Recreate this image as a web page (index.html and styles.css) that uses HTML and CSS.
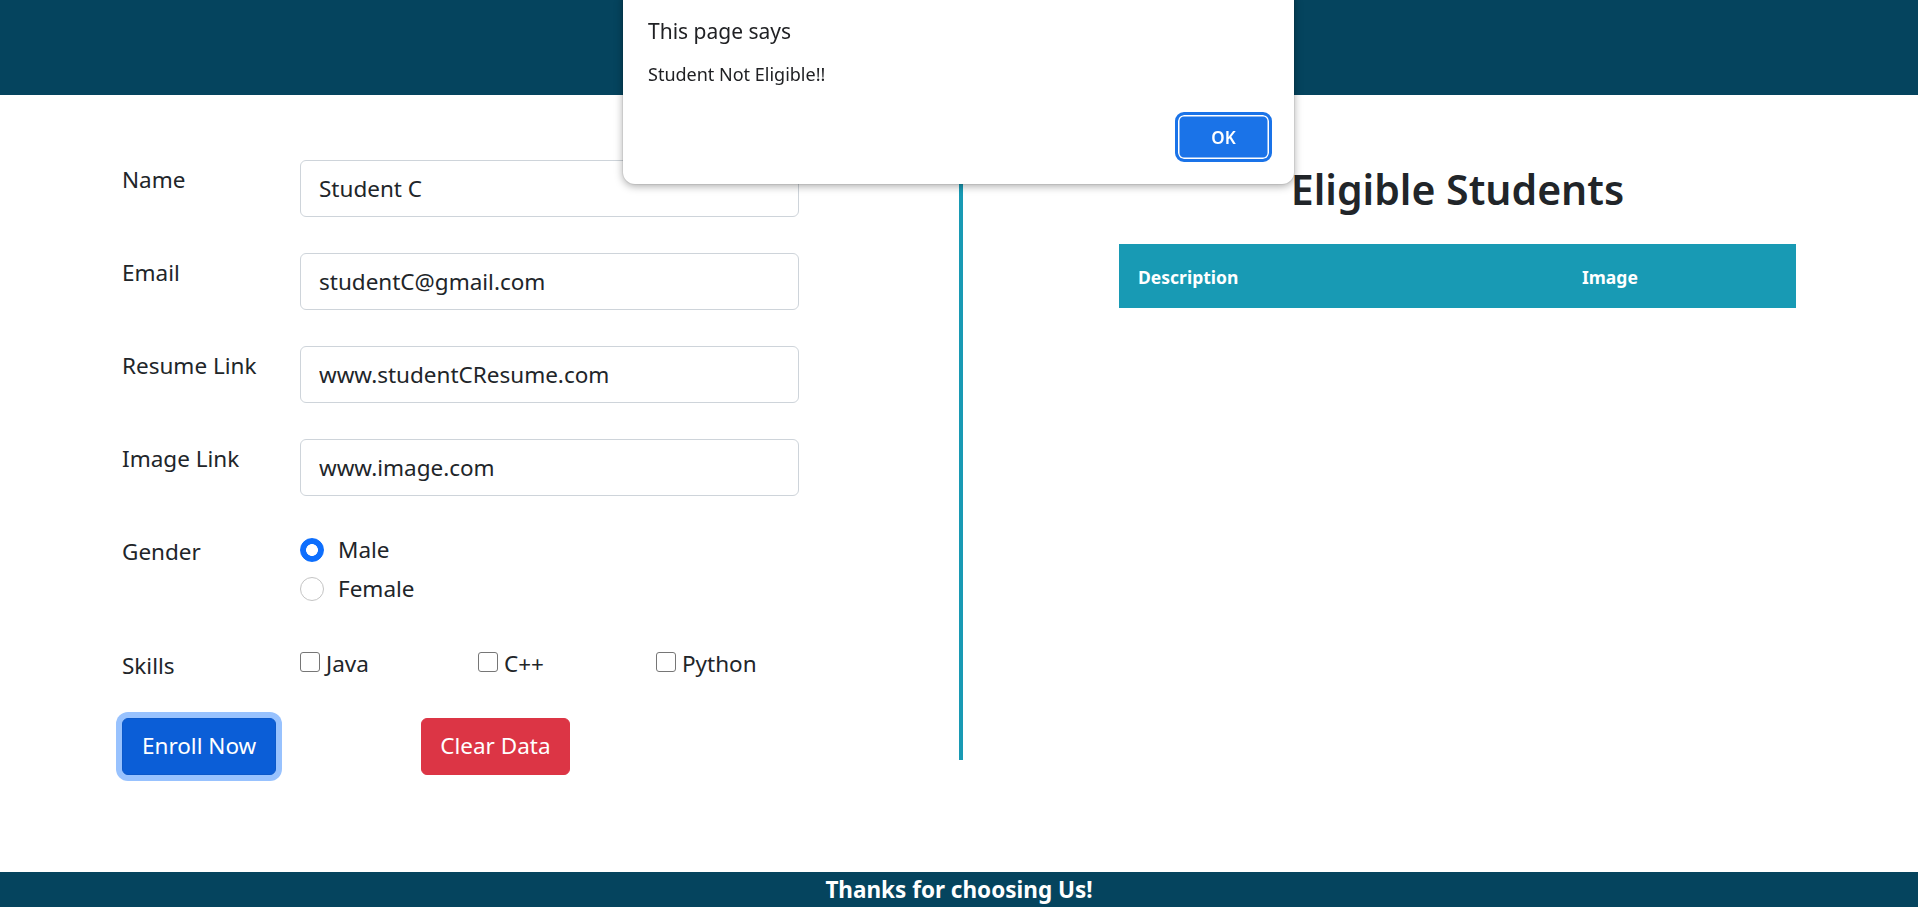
FILE: index.html
```html
<!DOCTYPE html>
<html lang="en">
<head>
<meta charset="utf-8">
<title>Student Enrollment</title>
<link rel="stylesheet" href="styles.css">
</head>
<body>
<header class="topbar"></header>
<main class="content">
  <section class="form-col">
    <form class="form">
      <div class="row">
        <label class="lbl">Name</label>
        <input class="field" type="text" value="Student C">
      </div>
      <div class="row">
        <label class="lbl">Email</label>
        <input class="field" type="text" value="studentC@gmail.com">
      </div>
      <div class="row">
        <label class="lbl">Resume Link</label>
        <input class="field" type="text" value="www.studentCResume.com">
      </div>
      <div class="row">
        <label class="lbl">Image Link</label>
        <input class="field" type="text" value="www.image.com">
      </div>
      <div class="row">
        <span class="lbl">Gender</span>
        <div class="radios">
          <label class="check"><span class="radio on"></span>Male</label>
          <label class="check"><span class="radio"></span>Female</label>
        </div>
      </div>
      <div class="row skills-row">
        <span class="lbl">Skills</span>
        <div class="skills">
          <label class="skill"><span class="box"></span>Java</label>
          <label class="skill"><span class="box"></span>C++</label>
          <label class="skill"><span class="box"></span>Python</label>
        </div>
      </div>
      <div class="actions">
        <button type="button" class="btn enroll">Enroll Now</button>
        <button type="button" class="btn clear">Clear Data</button>
      </div>
    </form>
  </section>
  <div class="divider"></div>
  <section class="list-col">
    <div class="list-inner">
      <h2 class="title">Eligible Students</h2>
      <table class="students">
        <thead>
          <tr><th class="c-desc">Description</th><th class="c-img">Image</th></tr>
        </thead>
        <tbody></tbody>
      </table>
    </div>
  </section>
</main>
<footer class="footer">Thanks for choosing Us!</footer>

<div class="alert">
  <div class="alert-title">This page says</div>
  <div class="alert-msg">Student Not Eligible!!</div>
  <div class="alert-actions"><button type="button" class="ok">OK</button></div>
</div>
</body>
</html>
```
FILE: styles.css
```css
* { box-sizing: border-box; }
html, body { margin: 0; padding: 0; }
body {
  height: 907px;
  display: flex;
  flex-direction: column;
  font-family: "Noto Sans", "Open Sans", sans-serif;
  font-size: 22.5px;
  line-height: 36px;
  color: #212529;
  background: #fff;
  overflow: hidden;
}
.topbar { height: 95px; background: #05445e; flex: none; }
.content { flex: 1; display: flex; align-items: flex-start; padding-top: 35px; }

.form-col { width: 959px; flex: none; padding: 30px 0 0 122px; }
.row { display: flex; align-items: flex-start; margin-bottom: 36px; }
.lbl { width: 178px; flex: none; padding-top: 1.5px; }
.field {
  width: 499px;
  height: 57px;
  padding: 9px 18px;
  border: 1.5px solid #ced4da;
  border-radius: 6px;
  font-family: "Noto Sans", "Open Sans", sans-serif;
  font-size: 22.5px;
  line-height: 36px;
  color: #212529;
  background: #fff;
  outline: none;
}
.radios { display: flex; flex-direction: column; }
.check { display: flex; align-items: center; height: 36px; margin-bottom: 3px; }
.radio {
  width: 24px; height: 24px; border-radius: 50%;
  border: 1.5px solid #c4c4c4; background: #fff;
  margin-right: 14px; flex: none;
}
.radio.on { border-color: #0d6efd; background: radial-gradient(circle, #fff 0 5.6px, #0d6efd 6.2px); }
.skills-row { margin-bottom: 34px; }
.skills { display: flex; }
.skill { width: 178px; display: flex; align-items: flex-start; }
.box {
  width: 20px; height: 20px; margin-top: 6px; margin-right: 6px;
  border: 1.5px solid #767676; border-radius: 3px; background: #fff; flex: none;
}
.actions { display: flex; gap: 145px; }
.btn {
  height: 57px;
  padding: 9px 18px;
  border-radius: 6px;
  font-family: "Noto Sans", "Open Sans", sans-serif;
  font-size: 22.5px;
  line-height: 36px;
  color: #fff;
}
.enroll { background: #0b5ed7; border: 1.5px solid #0a58ca; box-shadow: 0 0 0 6px #98c2fe; padding: 9px 19px; }
.clear { background: #dc3545; border: 1.5px solid #dc3545; }

.divider { width: 4px; height: 630px; background: #189ab4; flex: none; }

.list-col { flex: 1; padding-left: 156px; }
.list-inner { width: 677px; }
.title {
  margin: 34.5px 0 30px;
  text-align: center;
  font-size: 41px;
  font-weight: 600;
  line-height: 49px;
}
.students { width: 677px; border-collapse: collapse; }
.students th {
  height: 64px;
  padding: 2px 19px 0;
  background: #189ab4;
  color: #fff;
  text-align: left;
  font-size: 17.5px;
  font-weight: 700;
  line-height: 26px;
}
.c-desc { width: 444px; }

.footer {
  height: 35px; flex: none; overflow: hidden;
  background: #05445e; color: #fff;
  text-align: center; font-weight: 700; font-size: 22.5px; line-height: 36px;
}

.alert {
  position: fixed; top: -12px; left: 623px;
  width: 671px; height: 195.5px;
  background: #fff;
  border-radius: 12px;
  box-shadow: 0 2px 8px rgba(0,0,0,.35), 0 0 0 1px rgba(0,0,0,.06);
  padding: 29px 22px 0 25px;
}
.alert-title { font-size: 21px; line-height: 28px; color: #202124; }
.alert-msg { margin-top: 17px; font-size: 18px; line-height: 24px; color: #202124; }
.alert-actions { display: flex; justify-content: flex-end; margin-top: 26px; }
.ok {
  width: 97px; height: 50px;
  border: 3px solid #1a73e8; border-radius: 9px;
  background: #1a73e8; box-shadow: inset 0 0 0 1.5px #fff;
  color: #fff; font-family: "Noto Sans", "Open Sans", sans-serif;
  font-size: 17px; font-weight: 600; padding: 0;
}
```
